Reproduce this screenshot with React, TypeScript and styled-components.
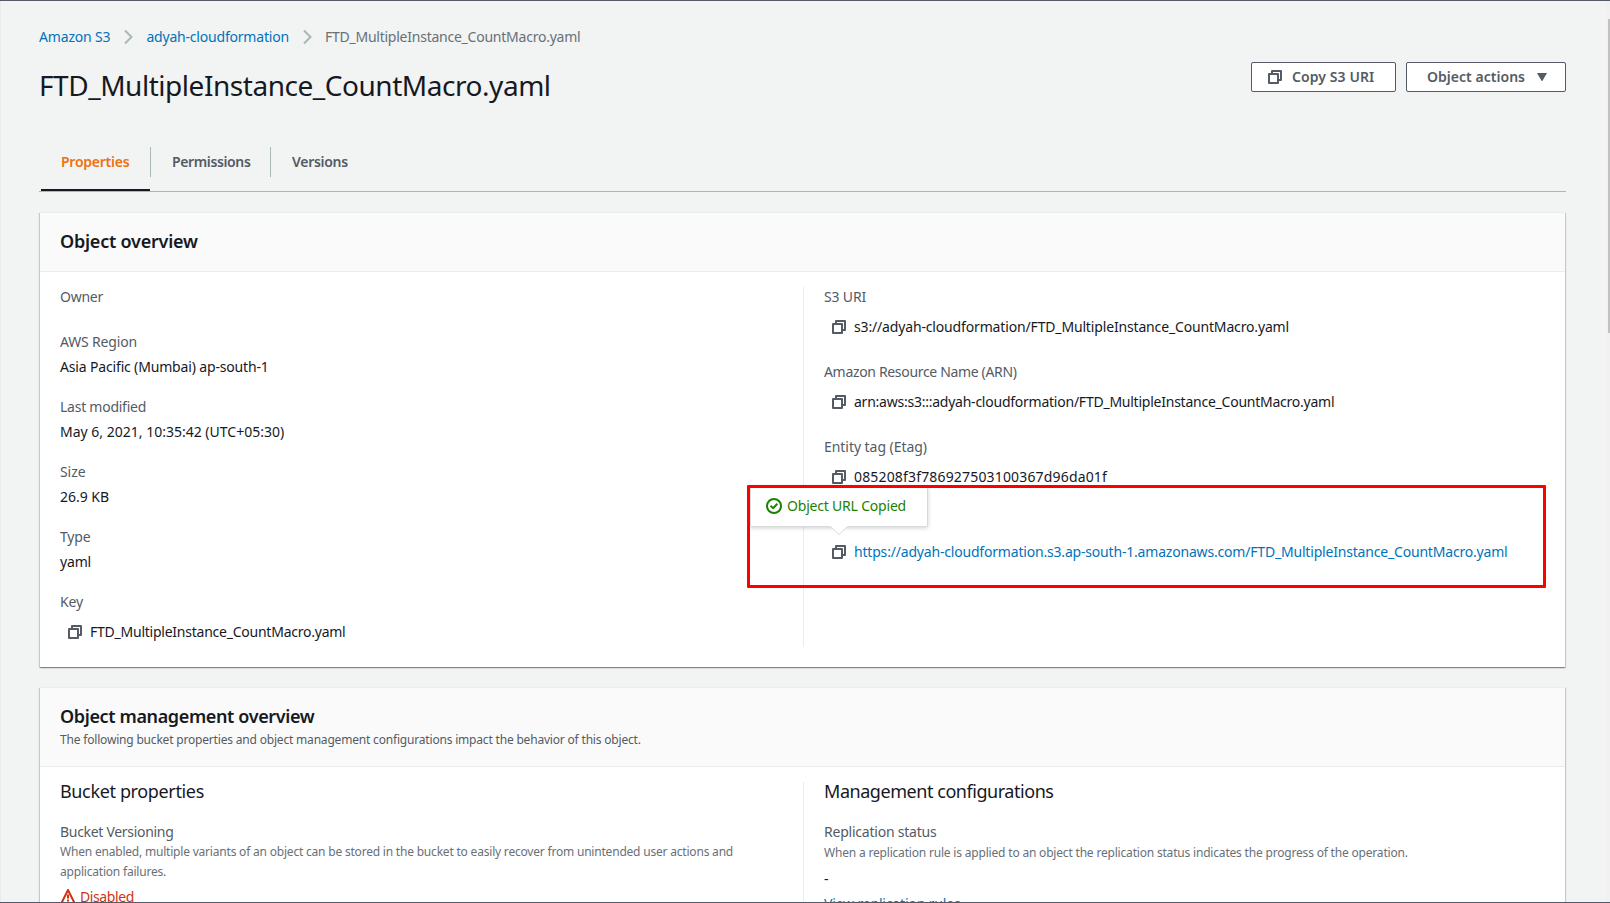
import React from "react";
import styled, { createGlobalStyle, css } from "styled-components";

const color = {
  text: "#16191f",
  secondary: "#545b64",
  muted: "#687078",
  link: "#0073bb",
  accent: "#ec7211",
  success: "#1d8102",
  error: "#d13212",
  page: "#f2f3f3",
  line: "#eaeded",
  rule: "#aab7b8",
};

const GlobalStyle = createGlobalStyle`
  * { box-sizing: border-box; }
  body {
    margin: 0;
    overflow: hidden;
    background: ${color.page};
    color: ${color.text};
    font-family: "Noto Sans", "Open Sans", sans-serif;
    font-size: 14px;
    line-height: 20px;
  }
  h1, h2, h3, p { margin: 0; }
`;

const Page = styled.div`
  position: relative;
  display: flex;
  width: 1610px;
  height: 903px;
  overflow: hidden;
  border-top: 1px solid ${color.secondary};
  border-bottom: 1px solid ${color.secondary};
  background: ${color.page};
`;

const Content = styled.main`
  flex: 1;
  min-width: 0;
  padding: 25px 40px 0 38px;
  border-left: 1px solid #e9ebed;
`;

const ScrollTrack = styled.div`
  display: flex;
  justify-content: flex-end;
  width: 4px;
  padding-top: 18px;
  background: #f1f1f1;
`;

const ScrollThumb = styled.div`
  width: 2px;
  height: 314px;
  background: #c1c1c1;
`;

/* Text with per-string tracking */
const Text = styled.span<{ $track?: number }>`
  white-space: nowrap;
  letter-spacing: ${(p) => p.$track ?? -0.2}px;
`;

const Link = styled(Text)`
  color: ${color.link};
`;

const Breadcrumbs = styled.nav`
  display: flex;
  align-items: center;
  gap: 13px;
  height: 22px;
  color: ${color.muted};
`;

const HeaderRow = styled.header`
  display: flex;
  justify-content: space-between;
  align-items: flex-start;
  height: 42px;
  margin-top: 14px;
`;

const PageTitle = styled.h1`
  padding-top: 5px;
  font-size: 28px;
  line-height: 36px;
  font-weight: 400;
  letter-spacing: -0.46px;
`;

const Actions = styled.div`
  display: flex;
  gap: 10px;
`;

const Button = styled.button<{ $width: number; $lead: number; $gap: number }>`
  display: flex;
  align-items: center;
  gap: ${(p) => p.$gap}px;
  width: ${(p) => p.$width}px;
  height: 30px;
  padding: 0 0 0 ${(p) => p.$lead}px;
  border: 1px solid ${color.secondary};
  border-radius: 2px;
  background: #fff;
  color: ${color.secondary};
  font: 600 14px/20px "Noto Sans", sans-serif;
`;

const Tabs = styled.div`
  display: flex;
  height: 45px;
  margin-top: 43px;
  padding-left: 2px;
  border-bottom: 1px solid ${color.rule};
`;

const Tab = styled.div<{ $width: number; $active?: boolean }>`
  width: ${(p) => p.$width}px;
  height: 44px;
  color: ${color.secondary};
  font-weight: 600;
  ${(p) =>
    p.$active &&
    css`
      color: ${color.accent};
      border-bottom: 2px solid ${color.text};
    `}
`;

const TabLabel = styled.div<{ $divided?: boolean }>`
  height: 30px;
  padding-left: ${(p) => (p.$divided ? 21 : 20)}px;
  line-height: 30px;
  border-left: ${(p) => (p.$divided ? `1px solid ${color.rule}` : "0")};
`;

const Card = styled.section`
  margin: 20px 1px 0;
  border-top: 1px solid ${color.line};
  background: #fff;
  box-shadow: 0 1px 1px 0 rgba(0, 28, 36, 0.3), 1px 1px 1px 0 rgba(0, 28, 36, 0.15),
    -1px 1px 1px 0 rgba(0, 28, 36, 0.15);
`;

const CardHeader = styled.div<{ $height: number }>`
  height: ${(p) => p.$height}px;
  padding: 17px 20px 0;
  border-bottom: 1px solid ${color.line};
  background: #fafafa;
`;

const CardTitle = styled.h2<{ $track: number }>`
  font-size: 18px;
  line-height: 22px;
  font-weight: 600;
  letter-spacing: ${(p) => p.$track}px;
`;

const Hint = styled.p<{ $offset?: number; $dim?: boolean; $track?: number }>`
  margin-top: ${(p) => p.$offset ?? 0}px;
  font-size: 12px;
  line-height: 20px;
  white-space: nowrap;
  letter-spacing: ${(p) => p.$track ?? -0.187}px;
  color: ${(p) => (p.$dim ? color.muted : color.secondary)};
`;

const Columns = styled.div`
  display: grid;
  grid-template-columns: 763px 1fr;
  padding: 15px 0 20px;
`;

const Column = styled.div<{ $divided?: boolean }>`
  display: flex;
  flex-direction: column;
  gap: 20px;
  padding-left: 20px;
  border-left: ${(p) => (p.$divided ? `1px solid ${color.line}` : "0")};
`;

const Field = styled.div`
  display: flex;
  flex-direction: column;
  gap: 5px;
`;

const Label = styled(Text)<{ $clipped?: boolean }>`
  color: ${color.secondary};
  ${(p) =>
    p.$clipped &&
    css`
      height: 15px;
      margin-bottom: 5px;
      overflow: hidden;
    `}
`;

const CopyRow = styled.div`
  display: flex;
  align-items: center;
  gap: 7px;
  height: 30px;
  padding-left: 7px;
`;

const IconSlot = styled.span`
  position: relative;
  display: flex;
  flex: none;
  width: 16px;
  height: 16px;
  color: ${color.secondary};
`;

const Popover = styled.div`
  position: absolute;
  left: -81px;
  top: -58px;
  display: flex;
  align-items: flex-start;
  gap: 5px;
  width: 178px;
  height: 41px;
  padding: 9px 0 0 15px;
  border: 1px solid #d5dbdb;
  border-radius: 2px;
  background: #fff;
  box-shadow: 0 1px 4px 0 rgba(0, 28, 36, 0.2);
  color: ${color.success};
  & > svg:first-child { margin-top: 2px; }
`;

const PopoverArrow = styled.svg`
  position: absolute;
  left: 78px;
  top: 38px;
`;

const SectionColumn = styled(Column)`
  gap: 0;
`;

const SectionTitle = styled.h3<{ $track: number }>`
  margin-bottom: 22px;
  font-size: 18px;
  line-height: 18px;
  font-weight: 400;
  white-space: nowrap;
  letter-spacing: ${(p) => p.$track}px;
`;

const Status = styled.div`
  display: flex;
  align-items: flex-start;
  gap: 4px;
  margin-top: 5px;
  color: ${color.error};
`;

const Dash = styled.div`
  margin: 6px 0 5px;
`;

const Highlight = styled.div`
  position: absolute;
  left: 747px;
  top: 484px;
  width: 799px;
  height: 103px;
  border: 3px solid #fe0000;
  border-radius: 1px;
  pointer-events: none;
`;

const Chevron = () => (
  <svg width="10" height="16" viewBox="0 0 10 16" fill="none" stroke={color.rule} strokeWidth="2">
    <path d="M2 1.500 8.500 8 2 14.500" />
  </svg>
);

const CopyIcon = () => (
  <svg width="16" height="16" viewBox="0 0 16 16" fill="none" stroke="currentColor" strokeWidth="2" strokeLinejoin="round">
    <path d="M2 5h9v9H2z" />
    <path d="M5 5V2h9v9h-3" />
  </svg>
);

const CaretIcon = () => (
  <svg width="10" height="8" viewBox="0 0 10 8" fill="currentColor">
    <path d="M0 0h10L5.6 7.6a.7.7 0 0 1-1.2 0z" />
  </svg>
);

const CheckIcon = () => (
  <svg width="16" height="16" viewBox="0 0 16 16" fill="none" stroke="currentColor" strokeWidth="2">
    <circle cx="8" cy="8" r="7" />
    <path d="M4.5 7.8 7.2 10.2 11.3 5.8" />
  </svg>
);

const WarningIcon = () => (
  <svg width="16" height="18" viewBox="0 0 16 18" fill="none" stroke="currentColor" strokeWidth="2" strokeLinejoin="round">
    <path d="M8 3 14.5 16H1.5z" />
    <path d="M8 7.5v4M8 12.5v2" />
  </svg>
);

const FILE = "FTD_MultipleInstance_CountMacro.yaml";

type Copyable = { label: string; labelTrack: number; value: string; track: number; url?: boolean };

const details = [
  { label: "Owner", labelTrack: -0.25, value: "", track: 0 },
  { label: "AWS Region", labelTrack: -0.17, value: "Asia Pacific (Mumbai) ap-south-1", track: -0.16 },
  { label: "Last modified", labelTrack: -0.25, value: "May 6, 2021, 10:35:42 (UTC+05:30)", track: 0 },
  { label: "Size", labelTrack: -0.07, value: "26.9 KB", track: -0.02 },
  { label: "Type", labelTrack: -0.16, value: "yaml", track: -0.17 },
];

const locations: Copyable[] = [
  { label: "S3 URI", labelTrack: -0.17, value: `s3://adyah-cloudformation/${FILE}`, track: -0.156 },
  { label: "Amazon Resource Name (ARN)", labelTrack: -0.33, value: `arn:aws:s3:::adyah-cloudformation/${FILE}`, track: -0.24 },
  { label: "Entity tag (Etag)", labelTrack: -0.047, value: "085208f3f786927503100367d96da01f", track: 0.165 },
  {
    label: "Object URL",
    labelTrack: -0.2,
    value: `https://adyah-cloudformation.s3.ap-south-1.amazonaws.com/${FILE}`,
    track: -0.189,
    url: true,
  },
];

const CopiedPopover = () => (
  <Popover>
    <CheckIcon />
    <Text $track={-0.2}>Object URL Copied</Text>
    <PopoverArrow width="20" height="11" viewBox="0 0 20 11">
      <path d="M1.5 0v1.5L10 10l8.500-8.500V0z" fill="#fff" />
      <path d="M1.500 1.500 10 9.500l8.500-8" fill="none" stroke="#d5dbdb" />
    </PopoverArrow>
  </Popover>
);

const CopyField = ({ label, labelTrack, value, track, url }: Copyable) => (
  <Field>
    <Label $track={labelTrack} $clipped={url}>{label}</Label>
    <CopyRow>
      <IconSlot>
        <CopyIcon />
        {url && <CopiedPopover />}
      </IconSlot>
      {url ? <Link $track={track}>{value}</Link> : <Text $track={track}>{value}</Text>}
    </CopyRow>
  </Field>
);

export default function App() {
  return (
    <>
      <GlobalStyle />
      <Page>
        <Content>
          <Breadcrumbs>
            <Link $track={-0.17}>Amazon S3</Link>
            <Chevron />
            <Link $track={-0.2}>adyah-cloudformation</Link>
            <Chevron />
            <Text $track={-0.239}>{FILE}</Text>
          </Breadcrumbs>

          <HeaderRow>
            <PageTitle>{FILE}</PageTitle>
            <Actions>
              <Button $width={145} $lead={15} $gap={9}>
                <CopyIcon />
                <Text $track={0.09}>Copy S3 URI</Text>
              </Button>
              <Button $width={160} $lead={20} $gap={12}>
                <Text $track={0.03}>Object actions</Text>
                <CaretIcon />
              </Button>
            </Actions>
          </HeaderRow>

          <Tabs>
            <Tab $width={109} $active>
              <TabLabel><Text $track={-0.25}>Properties</Text></TabLabel>
            </Tab>
            <Tab $width={120}>
              <TabLabel $divided><Text $track={-0.37}>Permissions</Text></TabLabel>
            </Tab>
            <Tab $width={100}>
              <TabLabel $divided><Text $track={-0.29}>Versions</Text></TabLabel>
            </Tab>
          </Tabs>

          <Card>
            <CardHeader $height={59}>
              <CardTitle $track={-0.22}>Object overview</CardTitle>
            </CardHeader>
            <Columns>
              <Column>
                {details.map((d) => (
                  <Field key={d.label}>
                    <Label $track={d.labelTrack}>{d.label}</Label>
                    <Text $track={d.track}>{d.value}</Text>
                  </Field>
                ))}
                <CopyField label="Key" labelTrack={-0.14} value={FILE} track={-0.239} />
              </Column>
              <Column $divided>
                {locations.map((l) => (
                  <CopyField key={l.label} {...l} />
                ))}
              </Column>
            </Columns>
          </Card>

          <Card>
            <CardHeader $height={79}>
              <CardTitle $track={-0.37}>Object management overview</CardTitle>
              <Hint $offset={3}>
                The following bucket properties and object management configurations impact the behavior of this object.
              </Hint>
            </CardHeader>
            <Columns>
              <SectionColumn>
                <SectionTitle $track={-0.36}>Bucket properties</SectionTitle>
                <Label $track={-0.303}>Bucket Versioning</Label>
                <Hint $dim $track={-0.2}>
                  When enabled, multiple variants of an object can be stored in the bucket to easily recover from unintended user actions and
                  <br />
                  application failures.
                </Hint>
                <Status>
                  <WarningIcon />
                  <Text $track={-0.39}>Disabled</Text>
                </Status>
              </SectionColumn>
              <SectionColumn $divided>
                <SectionTitle $track={-0.45}>Management configurations</SectionTitle>
                <Label $track={-0.22}>Replication status</Label>
                <Hint $dim $offset={1}>
                  When a replication rule is applied to an object the replication status indicates the progress of the operation.
                </Hint>
                <Dash>-</Dash>
                <Link $track={-0.17}>View replication rules</Link>
              </SectionColumn>
            </Columns>
          </Card>
        </Content>
        <ScrollTrack>
          <ScrollThumb />
        </ScrollTrack>
        <Highlight />
      </Page>
    </>
  );
}
